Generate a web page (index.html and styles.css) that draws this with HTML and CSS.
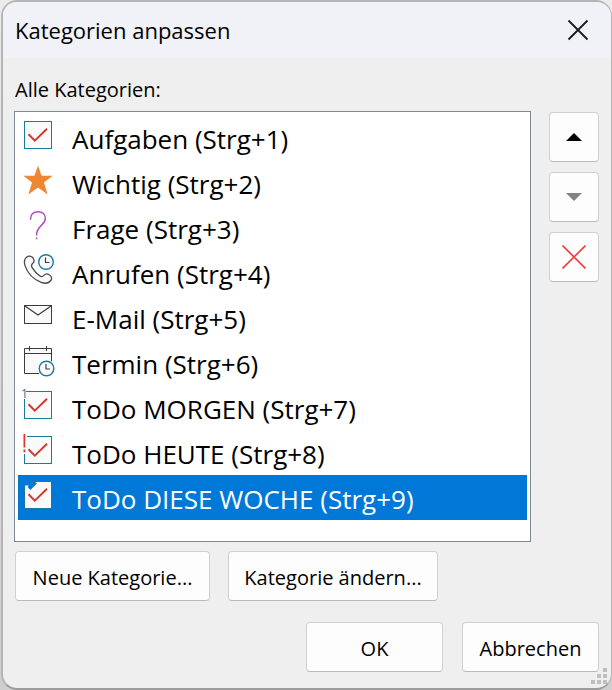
FILE: index.html
```html
<!DOCTYPE html>
<html lang="de">
<head>
    <meta charset="UTF-8">
    <meta name="viewport" content="width=device-width, initial-scale=1.0">
    <title>Kategorien anpassen</title>
    <link rel="stylesheet" href="styles.css">
</head>
<body>
    <svg class="defs" aria-hidden="true">
        <symbol id="box" viewBox="0 0 40 45">
            <rect x="6.5" y="6.5" width="27" height="27" fill="#fafafa" stroke="#1a7a9e"/>
        </symbol>
        <symbol id="tick" viewBox="0 0 40 45">
            <path d="M10.5 19.3 L16.8 25.6 L29 13.8" fill="none" stroke="#d13a30" stroke-width="2"/>
        </symbol>
        <symbol id="clock" viewBox="0 0 18 18">
            <circle cx="9" cy="9" r="7.3" fill="#fafafa" stroke="#1a7a9e" stroke-width="1.4"/>
            <path d="M8.5 4.5 V9.5 H12.5" fill="none" stroke="#3c3c3c" stroke-width="1.2"/>
        </symbol>
    </svg>

    <div class="dialog" role="dialog" aria-labelledby="title">
        <header class="titlebar">
            <h1 id="title">Kategorien anpassen</h1>
            <button class="close" aria-label="Schließen">
                <svg width="22" height="22" viewBox="0 0 22 22"><path d="M1.5 1.5 L20.5 20.5 M20.5 1.5 L1.5 20.5" stroke="#1a1a1a" stroke-width="1.8"/></svg>
            </button>
        </header>

        <main class="content">
            <div class="list-label" id="listLabel">Alle Kategorien:</div>
            <div class="list-area">
                <ul class="list" role="listbox" aria-labelledby="listLabel" tabindex="0">
                    <li role="option">
                        <svg class="icon" viewBox="0 0 40 45"><use href="#box"/><use href="#tick"/></svg>
                        <span>Aufgaben (Strg+1)</span>
                    </li>
                    <li role="option">
                        <svg class="icon" viewBox="0 0 40 45"><path d="M20 5.5 L23.6 15.8 H34.7 L26 22.6 L29.6 34.5 L20 27.4 L10.4 34.5 L14 22.6 L5.3 15.8 H16.4 Z" fill="#ed8733"/></svg>
                        <span>Wichtig (Strg+2)</span>
                    </li>
                    <li role="option">
                        <svg class="icon" viewBox="0 0 40 45"><path d="M12.6 14.8 V13.5 C12.6 9.3 15.5 6.7 20 6.7 C24.5 6.7 27.4 9.5 27.4 13.5 C27.4 20.5 18.5 20 18.5 30.5 M18.5 32.6 V34.2" fill="none" stroke="#b04fbe" stroke-width="1.5"/></svg>
                        <span>Frage (Strg+3)</span>
                    </li>
                    <li role="option">
                        <svg class="icon" viewBox="0 0 40 45">
                            <path d="M8.3 7.4 C10.8 5.3 13.6 5.8 15.1 8.1 C16.6 10.4 16.3 12.2 14.6 13.6 C13.2 14.8 13.2 16 14 17.4 C16 20.8 18.6 23.7 22 26 C23.4 27 24.6 26.8 25.8 25.4 C27.2 23.8 29.2 23.5 31.2 24.8 C33.8 26.4 34.2 28.6 32.8 30.5 C30.6 33.5 27.5 34 23.2 32.4 C15 29.2 9.7 23.5 7 15.6 C5.9 12 6.2 9.4 8.3 7.4 Z" fill="#fafafa" stroke="#4a4a4a" stroke-width="1.3"/>
                            <use href="#clock" x="19" y="3" width="18" height="18"/>
                        </svg>
                        <span>Anrufen (Strg+4)</span>
                    </li>
                    <li role="option">
                        <svg class="icon" viewBox="0 0 40 45">
                            <rect x="6.5" y="10.5" width="27" height="18" fill="#fafafa" stroke="#3c3c3c"/>
                            <path d="M7 11 L20 20 L33 11" fill="none" stroke="#3c3c3c" stroke-width="1.2"/>
                        </svg>
                        <span>E-Mail (Strg+5)</span>
                    </li>
                    <li role="option">
                        <svg class="icon" viewBox="0 0 40 45">
                            <path d="M6.5 8.5 H33.5 V33.5 H6.5 Z" fill="#fafafa" stroke="#3c3c3c"/>
                            <path d="M6.5 13.5 H33.5 M11.5 6 V11 M28.5 6 V11" fill="none" stroke="#3c3c3c"/>
                            <circle cx="28.5" cy="28.5" r="9" fill="#fff"/>
                            <use href="#clock" x="19.5" y="19.5" width="18" height="18"/>
                        </svg>
                        <span>Termin (Strg+6)</span>
                    </li>
                    <li role="option">
                        <svg class="icon" viewBox="0 0 40 45">
                            <use href="#box"/><use href="#tick"/>
                            <path d="M4 4 H8 V14 H4 Z" fill="#fff"/>
                            <text x="3" y="13" class="badge">1</text>
                        </svg>
                        <span>ToDo MORGEN (Strg+7)</span>
                    </li>
                    <li role="option">
                        <svg class="icon" viewBox="0 0 40 45">
                            <use href="#box"/><use href="#tick"/>
                            <path d="M4 3 H9 V24 H4 Z" fill="#fff"/>
                            <path d="M6.4 4 V17.5 M6.4 19.5 V22.3" stroke="#e0362c" stroke-width="1.8"/>
                        </svg>
                        <span>ToDo HEUTE (Strg+8)</span>
                    </li>
                    <li role="option" aria-selected="true" class="selected">
                        <svg class="icon" viewBox="0 0 40 45">
                            <use href="#box"/><use href="#tick"/>
                            <path d="M5 8.5 H16 M12 5 L16 8.5 L11 13.5" fill="none" stroke="#0078d7" stroke-width="4"/>
                            <path d="M4 8.5 H16.5 M12.5 4.5 L16.5 8.5 L12.5 12.5" fill="none" stroke="#1a7a9e" stroke-width="1.2"/>
                        </svg>
                        <span>ToDo DIESE WOCHE (Strg+9)</span>
                    </li>
                </ul>
                <div class="side">
                    <button class="btn square" aria-label="Nach oben"><svg width="16" height="8" viewBox="0 0 16 8"><path d="M8 0 L16 8 H0 Z" fill="#000"/></svg></button>
                    <button class="btn square" aria-label="Nach unten" disabled><svg width="16" height="8" viewBox="0 0 16 8"><path d="M0 0 H16 L8 8 Z" fill="#838383"/></svg></button>
                    <button class="btn square" aria-label="Löschen"><svg width="24" height="24" viewBox="0 0 24 24"><path d="M0.5 0.5 L23.5 23.5 M23.5 0.5 L0.5 23.5" stroke="#ee3f3c" stroke-width="1.6"/></svg></button>
                </div>
            </div>
            <div class="actions">
                <button class="btn new">Neue Kategorie...</button>
                <button class="btn change">Kategorie ändern...</button>
            </div>
        </main>

        <footer class="footer">
            <button class="btn confirm">OK</button>
            <button class="btn confirm">Abbrechen</button>
        </footer>
        <svg class="grip" width="16" height="16" viewBox="0 0 16 16"><path d="M12 0h4v4h-4z M6 6h4v4h-4z M12 6h4v4h-4z M0 12h4v4h-4z M6 12h4v4h-4z M12 12h4v4h-4z" fill="#bfbfbf"/></svg>
    </div>
</body>
</html>
```
FILE: styles.css
```css
* {
    box-sizing: border-box;
}
body {
    margin: 0;
    padding-left: 1px;
    background: linear-gradient(to bottom, #ececec, #cfcfcf);
    font-family: "Open Sans", "Noto Sans", sans-serif;
    font-size: 20px;
    color: #000;
}
.defs {
    display: none;
}
.dialog {
    position: relative;
    display: flex;
    flex-direction: column;
    min-height: 100vh;
    background: #efefef;
    border: 2px solid #b5b5b5;
    border-right-width: 1px;
    border-bottom-color: #9c9c9c;
    border-radius: 16px;
    overflow: hidden;
}
.titlebar {
    display: flex;
    align-items: center;
    justify-content: space-between;
    height: 56px;
    padding: 0 22px 0 12px;
    background: #f1f2f7;
}
h1 {
    margin: 0;
    font-size: 22px;
    font-weight: 400;
}
.close {
    display: flex;
    padding: 0;
    border: none;
    background: none;
}
.content {
    display: flex;
    flex-direction: column;
    flex: 1;
    padding: 18px 12px 0 11px;
}
.list-label {
    height: 35px;
    padding-left: 1px;
    line-height: 28px;
}
.list-area {
    display: flex;
    flex: 1;
    gap: 18px;
}
.list {
    flex: 1;
    margin: 0;
    padding: 3px;
    border: 1px solid #828790;
    background: #fff;
    list-style: none;
    font-size: 26px;
}
.list li {
    display: flex;
    align-items: center;
    gap: 14px;
    height: 45px;
    line-height: 45px;
    white-space: nowrap;
}
.list span {
    padding-top: 4px;
}
.list .selected {
    background: #0078d7;
    color: #fff;
}
.icon {
    width: 40px;
    height: 45px;
}
.badge {
    font-size: 12px;
    fill: #1a7a9e;
}
.side {
    display: flex;
    flex-direction: column;
    gap: 10px;
    padding-top: 1px;
}
.btn {
    height: 50px;
    padding: 2px 0 0;
    border: 1px solid #d0d0d0;
    border-bottom-color: #bababa;
    border-radius: 4px;
    background: #fdfdfd;
    color: #000;
    font-family: inherit;
    font-size: 20px;
}
.square {
    display: flex;
    align-items: center;
    justify-content: center;
    width: 50px;
    padding: 0;
}
.actions {
    display: flex;
    gap: 18px;
    padding: 9px 0 0 1px;
}
.new {
    width: 195px;
}
.change {
    width: 210px;
}
.footer {
    display: flex;
    justify-content: flex-end;
    gap: 19px;
    padding: 21px 12px 16px;
}
.confirm {
    width: 137px;
}
.grip {
    position: absolute;
    right: 4px;
    bottom: 4px;
}
```
